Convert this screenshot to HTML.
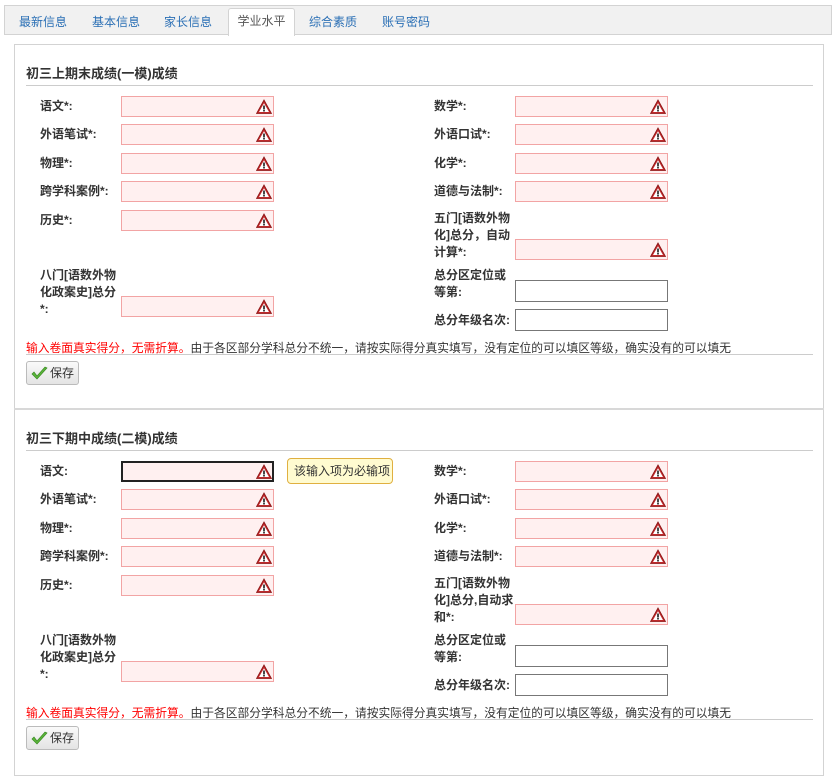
<!DOCTYPE html>
<html><head><meta charset="utf-8"><style>
*{box-sizing:border-box;margin:0;padding:0}
body{width:836px;height:780px;background:#fff;font-family:"Liberation Sans","Noto Sans CJK SC",sans-serif;font-size:12px;color:#333;position:relative;overflow:hidden}
.a{position:absolute}
.tabs{left:4px;top:5px;width:828px;height:30px;background:#f1f1f1;border:1px solid #d3d3d3}
.tab{top:7px;font-size:12px;color:#2a6fb5}
.act{left:223px;top:2px;width:67px;height:28px;background:#fff;border:1px solid #d3d3d3;border-bottom:none;border-radius:3px 3px 0 0;color:#555;text-align:center;line-height:24px}
.panel{left:14px;width:810px;height:366px;border:1px solid #d3d3d3;border-top-width:1px}
.title{left:11px;top:18px;font-size:13px;font-weight:bold;color:#333}
.hr{left:11px;width:787px;height:1px;background:#ccc}
.lb{font-weight:bold;font-size:12px;line-height:17px;color:#333}
.in{width:153px;height:21px;border:1px solid #f2a4a4;background:#fff0f0}
.in svg{position:absolute;right:1px;top:2px}
.pl{width:153px;height:22px;border:1px solid #777;background:#fff}
.note{left:11px;font-size:11.75px;white-space:nowrap}
.btn{left:11px;width:53px;height:24px;border:1px solid #bbb;border-radius:3px;background:linear-gradient(#fafafa,#e4e4e4);font-size:12px;line-height:22px;padding-left:23px;color:#333}
.btn svg{position:absolute;left:4px;top:4px}
.tip{left:272px;top:48px;width:106px;height:26px;border:1px solid #e0b040;background:#fffbd0;border-radius:4px;line-height:24px;padding-left:6px;font-size:12px;color:#333}
</style></head><body>
<div class="a tabs">
<span class="a tab" style="left:14px">最新信息</span>
<span class="a tab" style="left:87px">基本信息</span>
<span class="a tab" style="left:159px">家长信息</span>
<div class="a act">学业水平</div>
<span class="a tab" style="left:304px">综合素质</span>
<span class="a tab" style="left:377px">账号密码</span>
</div>

<svg width="0" height="0" style="position:absolute"><defs>
<symbol id="w" viewBox="0 0 16 16"><path d="M8 1L15.5 14.5H0.5Z" fill="#c0282a" stroke="#8a1515" stroke-width="0.8"/><path d="M8 4.2L13 13H3Z" fill="#fff"/><rect x="7.1" y="6.5" width="1.8" height="4" fill="#333"/><rect x="7.1" y="11" width="1.8" height="1.5" fill="#333"/></symbol>
</defs></svg>

<!-- PANEL 1 -->
<div class="a panel" style="top:44px">
<div class="a title">初三上期末成绩(一模)成绩</div>
<div class="a hr" style="top:40px"></div>
<div class="a lb" style="left:25px;top:53px">语文*:</div><div class="a in" style="left:106px;top:51px"><svg width="16" height="16"><use href="#w"/></svg></div>
<div class="a lb" style="left:25px;top:81px">外语笔试*:</div><div class="a in" style="left:106px;top:79px"><svg width="16" height="16"><use href="#w"/></svg></div>
<div class="a lb" style="left:25px;top:110px">物理*:</div><div class="a in" style="left:106px;top:108px"><svg width="16" height="16"><use href="#w"/></svg></div>
<div class="a lb" style="left:25px;top:138px">跨学科案例*:</div><div class="a in" style="left:106px;top:136px"><svg width="16" height="16"><use href="#w"/></svg></div>
<div class="a lb" style="left:25px;top:167px">历史*:</div><div class="a in" style="left:106px;top:165px"><svg width="16" height="16"><use href="#w"/></svg></div>
<div class="a lb" style="left:25px;top:222px;width:78px">八门[语数外物化政案史]总分*:</div><div class="a in" style="left:106px;top:251px"><svg width="16" height="16"><use href="#w"/></svg></div>
<div class="a lb" style="left:419px;top:53px">数学*:</div><div class="a in" style="left:500px;top:51px"><svg width="16" height="16"><use href="#w"/></svg></div>
<div class="a lb" style="left:419px;top:81px">外语口试*:</div><div class="a in" style="left:500px;top:79px"><svg width="16" height="16"><use href="#w"/></svg></div>
<div class="a lb" style="left:419px;top:110px">化学*:</div><div class="a in" style="left:500px;top:108px"><svg width="16" height="16"><use href="#w"/></svg></div>
<div class="a lb" style="left:419px;top:138px">道德与法制*:</div><div class="a in" style="left:500px;top:136px"><svg width="16" height="16"><use href="#w"/></svg></div>
<div class="a lb" style="left:419px;top:165px;width:80px">五门[语数外物化]总分，自动计算*:</div><div class="a in" style="left:500px;top:194px"><svg width="16" height="16"><use href="#w"/></svg></div>
<div class="a lb" style="left:419px;top:222px;width:80px">总分区定位或等第:</div><div class="a pl" style="left:500px;top:235px"></div>
<div class="a lb" style="left:419px;top:267px">总分年级名次:</div><div class="a pl" style="left:500px;top:264px"></div>
<div class="a note" style="top:294px"><span style="color:#f00">输入卷面真实得分，无需折算。</span>由于各区部分学科总分不统一，请按实际得分真实填写，没有定位的可以填区等级，确实没有的可以填无</div>
<div class="a hr" style="top:309px"></div>
<div class="a btn" style="top:316px"><svg width="17" height="15" viewBox="0 0 17 15"><path d="M1 8L6 13L16 2L14 1L6 10L3 6Z" fill="#5bb53a" stroke="#3a8a24" stroke-width="0.7"/></svg>保存</div>
</div>
<div class="a" style="left:14px;top:408px;width:810px;height:2px;background:#d8d8d8"></div>

<!-- PANEL 2 -->
<div class="a panel" style="top:410px;border-top:none">
<div class="a title">初三下期中成绩(二模)成绩</div>
<div class="a hr" style="top:40px"></div>
<div class="a lb" style="left:25px;top:53px">语文:</div><div class="a in" style="left:106px;top:51px;border:2px solid #222"><svg width="16" height="16" style="top:1px;right:0"><use href="#w"/></svg></div>
<div class="a tip">该输入项为必输项</div>
<div class="a lb" style="left:25px;top:81px">外语笔试*:</div><div class="a in" style="left:106px;top:79px"><svg width="16" height="16"><use href="#w"/></svg></div>
<div class="a lb" style="left:25px;top:110px">物理*:</div><div class="a in" style="left:106px;top:108px"><svg width="16" height="16"><use href="#w"/></svg></div>
<div class="a lb" style="left:25px;top:138px">跨学科案例*:</div><div class="a in" style="left:106px;top:136px"><svg width="16" height="16"><use href="#w"/></svg></div>
<div class="a lb" style="left:25px;top:167px">历史*:</div><div class="a in" style="left:106px;top:165px"><svg width="16" height="16"><use href="#w"/></svg></div>
<div class="a lb" style="left:25px;top:222px;width:78px">八门[语数外物化政案史]总分*:</div><div class="a in" style="left:106px;top:251px"><svg width="16" height="16"><use href="#w"/></svg></div>
<div class="a lb" style="left:419px;top:53px">数学*:</div><div class="a in" style="left:500px;top:51px"><svg width="16" height="16"><use href="#w"/></svg></div>
<div class="a lb" style="left:419px;top:81px">外语口试*:</div><div class="a in" style="left:500px;top:79px"><svg width="16" height="16"><use href="#w"/></svg></div>
<div class="a lb" style="left:419px;top:110px">化学*:</div><div class="a in" style="left:500px;top:108px"><svg width="16" height="16"><use href="#w"/></svg></div>
<div class="a lb" style="left:419px;top:138px">道德与法制*:</div><div class="a in" style="left:500px;top:136px"><svg width="16" height="16"><use href="#w"/></svg></div>
<div class="a lb" style="left:419px;top:165px;width:80px">五门[语数外物化]总分,自动求和*:</div><div class="a in" style="left:500px;top:194px"><svg width="16" height="16"><use href="#w"/></svg></div>
<div class="a lb" style="left:419px;top:222px;width:80px">总分区定位或等第:</div><div class="a pl" style="left:500px;top:235px"></div>
<div class="a lb" style="left:419px;top:267px">总分年级名次:</div><div class="a pl" style="left:500px;top:264px"></div>
<div class="a note" style="top:294px"><span style="color:#f00">输入卷面真实得分，无需折算。</span>由于各区部分学科总分不统一，请按实际得分真实填写，没有定位的可以填区等级，确实没有的可以填无</div>
<div class="a hr" style="top:309px"></div>
<div class="a btn" style="top:316px"><svg width="17" height="15" viewBox="0 0 17 15"><path d="M1 8L6 13L16 2L14 1L6 10L3 6Z" fill="#5bb53a" stroke="#3a8a24" stroke-width="0.7"/></svg>保存</div>
</div>
</body></html>
